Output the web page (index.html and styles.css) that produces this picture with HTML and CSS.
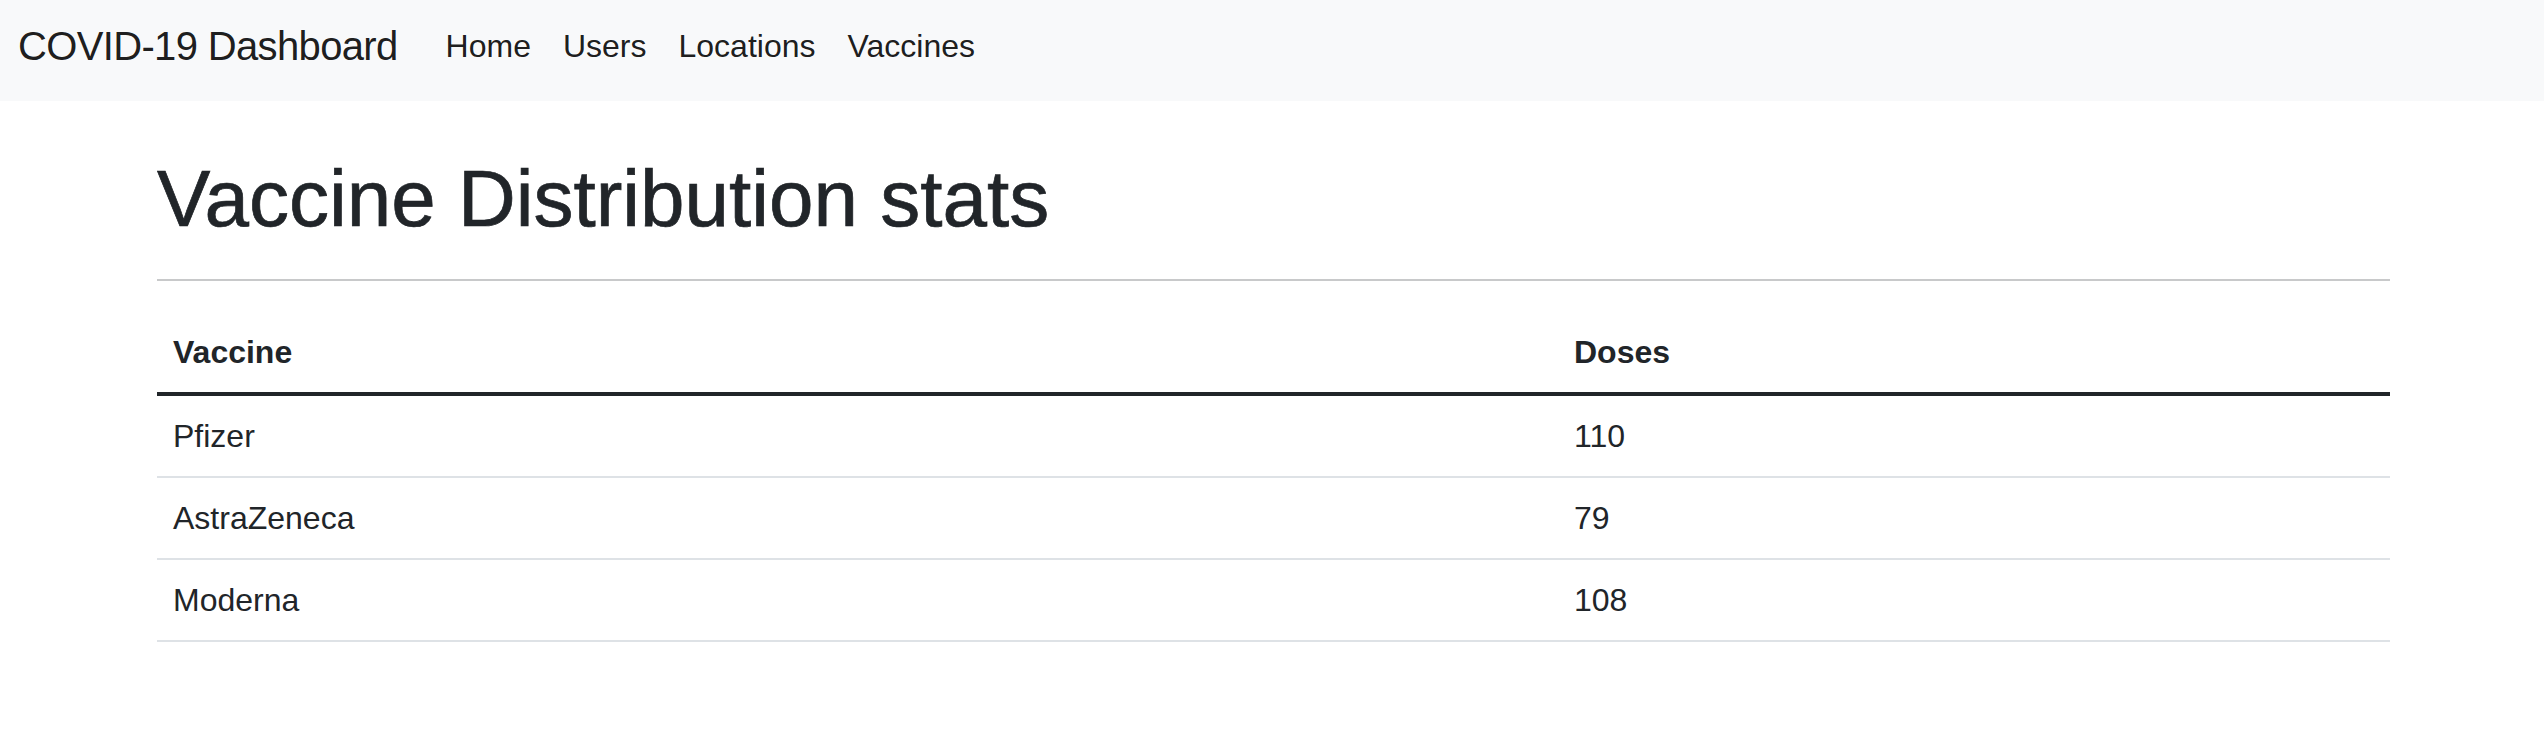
FILE: index.html
```html
<!DOCTYPE html>
<html lang="en">
<head>
<meta charset="utf-8">
<title>COVID-19 Dashboard</title>
<link rel="stylesheet" href="styles.css">
</head>
<body>
<nav class="navbar">
  <a class="brand" href="#">COVID-19 Dashboard</a>
  <ul class="nav">
    <li><a class="nav-link" href="#">Home</a></li>
    <li><a class="nav-link" href="#">Users</a></li>
    <li><a class="nav-link" href="#">Locations</a></li>
    <li><a class="nav-link" href="#">Vaccines</a></li>
  </ul>
</nav>
<main class="container">
  <h1 class="title">Vaccine Distribution stats</h1>
  <hr class="divider">
  <table class="table">
    <thead>
      <tr><th class="col-vaccine">Vaccine</th><th>Doses</th></tr>
    </thead>
    <tbody>
      <tr><td>Pfizer</td><td>110</td></tr>
      <tr><td>AstraZeneca</td><td>79</td></tr>
      <tr><td>Moderna</td><td>108</td></tr>
    </tbody>
  </table>
</main>
</body>
</html>
```

FILE: styles.css
```css
* { box-sizing: border-box; }

html, body {
  margin: 0;
  padding: 0;
  background: #ffffff;
}

body {
  font-family: "Liberation Sans", Arial, Helvetica, sans-serif;
  font-size: 32px;
  line-height: 1.5;
  color: #212529;
}

.navbar {
  display: flex;
  align-items: flex-start;
  height: 101px;
  padding: 16px 18px 0 18px;
  background: #f8f9fa;
}

.brand {
  font-size: 40px;
  line-height: 60px;
  letter-spacing: -0.65px;
  color: rgba(0, 0, 0, 0.9);
  text-decoration: none;
  margin-right: 32px;
  white-space: nowrap;
}

.nav {
  display: flex;
  list-style: none;
  margin: 6px 0 0 0;
  padding: 0;
}

.nav-link {
  display: block;
  padding: 0 16px;
  font-size: 32px;
  line-height: 48px;
  color: rgba(0, 0, 0, 0.9);
  text-decoration: none;
}

.container {
  max-width: 2282px;
  margin: 0 auto;
  padding: 50px 23px 0 26px;
}

.title {
  margin: 0 0 16px 0;
  font-size: 80px;
  line-height: 96px;
  font-weight: 500;
  color: #212529;
  -webkit-text-stroke: 0.7px #212529;
}

.divider {
  margin: 32px 0 31px 0;
  border: 0;
  border-top: 2px solid #c8c9ca;
  height: 0;
}

.table {
  width: 100%;
  border-collapse: collapse;
  color: #212529;
}

.table th,
.table td {
  text-align: left;
  padding: 16px;
  line-height: 48px;
  vertical-align: top;
}

.table th {
  font-weight: 700;
  border-bottom: 4px solid #212529;
}

.table td {
  border-bottom: 2px solid #dee2e6;
}

.col-vaccine {
  width: 1401px;
}
```
